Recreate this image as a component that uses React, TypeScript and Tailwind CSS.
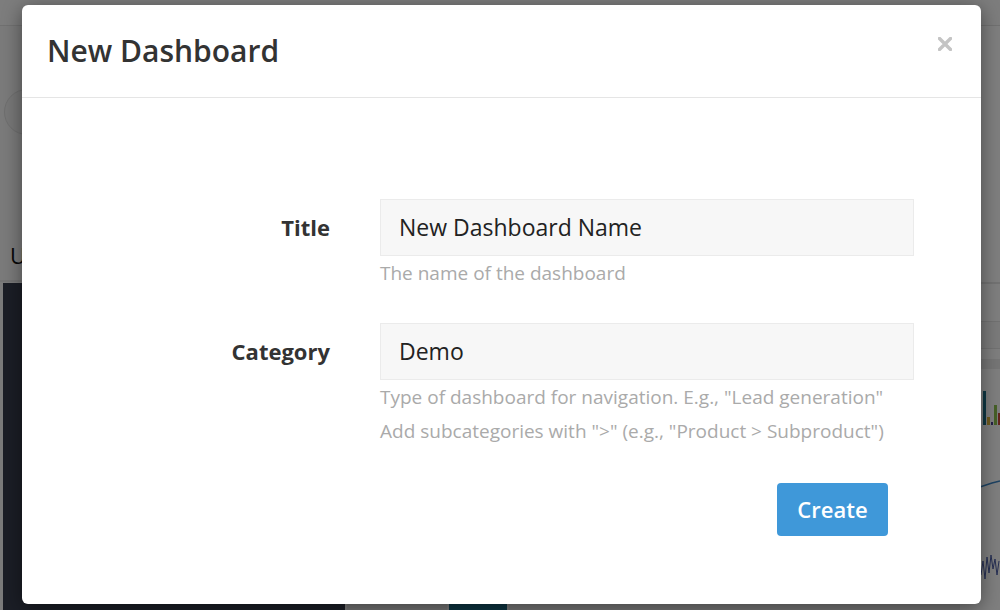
import React from "react";

const font = "font-['Open_Sans','Liberation_Sans',sans-serif]";

function BackgroundPage() {
  return (
    <div className="flex h-full w-full flex-col bg-[#f6f6f6]">
      {/* top nav */}
      <div className="h-[26px] w-full border-b border-[#e2e2e2] bg-[#fafafa]"></div>

      <div className="flex flex-1 justify-between">
        {/* left column */}
        <div className="flex w-[345px] flex-col">
          <div className="ml-[4px] mt-[63px] h-[46px] w-[46px] rounded-full border border-[#dedede] bg-[#f1f1f1]"></div>
          <div className="ml-[10px] mt-[105px] text-[22px] leading-[30px] text-[#111]">Usage</div>
          <div className="mt-[10px] h-[2px] w-full bg-[#e8e8e8]"></div>
          <div className="ml-[3px] mt-[1px] flex-1 bg-[#363c4c]"></div>
        </div>

        {/* middle thumbnails */}
        <div className="flex flex-1 items-end gap-[2px] pl-[2px]">
          <div className="h-[320px] w-[100px] bg-[#e9e9e9]"></div>
          <div className="h-[320px] w-[58px] bg-[#1a6a85]"></div>
          <div className="h-[320px] flex-1 bg-[#ededed]"></div>
        </div>

        {/* right charts */}
        <div className="flex w-[40px] flex-col bg-white">
          <div className="mt-[256px] h-[2px] bg-[#e6e6e6]"></div>
          <div className="mt-[37px] h-[28px] border-y border-[#e4e4e4] bg-[#f7f7f7]"></div>
          <div className="mt-[10px] h-[10px] bg-[#ececec]"></div>
          <div className="mt-[16px] flex h-[40px] items-end gap-[1px] pl-[23px]">
            <div className="h-[34px] w-[4px] bg-[#1d6e86]"></div>
            <div className="h-[8px] w-[3px] bg-[#e1b73a]"></div>
            <div className="h-[3px] w-[3px] bg-[#4a3d8f]"></div>
            <div className="h-[20px] w-[3px] bg-[#8cc34f]"></div>
            <div className="h-[12px] w-[3px] bg-[#c94a3a]"></div>
          </div>
          <svg width="40" height="70">
            <path d="M20 62 L26 60 L32 58 L40 56" stroke="#3d86c6" strokeWidth="1.5" fill="none" />
          </svg>
          <svg width="40" height="100">
            <path
              d="M21 80 L23 66 L25 84 L27 62 L29 78 L31 60 L33 74 L35 64 L37 80 L39 66"
              stroke="#4d5fa8"
              strokeWidth="1"
              fill="none"
            />
          </svg>
        </div>
      </div>
    </div>
  );
}

function CloseIcon() {
  return (
    <svg width="14" height="14" viewBox="0 0 14 14">
      <path d="M1.5 1.5 L12.5 12.5 M12.5 1.5 L1.5 12.5" stroke="#c4c4c4" strokeWidth="3.4" strokeLinecap="square" />
    </svg>
  );
}

export default function App() {
  return (
    <div className={`relative h-[610px] w-[1000px] overflow-hidden ${font}`}>
      <BackgroundPage />

      {/* dim overlay */}
      <div className="absolute inset-0 bg-black/50"></div>

      {/* MODAL */}
      <div className="absolute left-[22px] top-[5px] h-[599px] w-[959px] rounded-[6px] bg-white shadow-[0_4px_20px_rgba(0,0,0,0.45)]">
        {/* header */}
        <div className="flex h-[93px] items-center justify-between border-b border-[#e5e5e5] pl-[25px] pr-[29px]">
          <h2 className="text-[30px] font-semibold leading-[38px] text-[#333]">New Dashboard</h2>
          <button className="mt-[-14px] self-center">
            <CloseIcon />
          </button>
        </div>

        {/* body */}
        <div className="grid grid-cols-[308px_534px] gap-x-[50px] pt-[101px]">
          <label className="flex h-[57px] items-center justify-end text-[22px] font-bold text-[#333]">Title</label>
          <div className="flex flex-col">
            <div className="flex h-[57px] items-center border border-[#ebebeb] bg-[#f7f7f7] pl-[18px] text-[23px] text-[#222]">
              New Dashboard Name
            </div>
            <p className="text-[19px] leading-[34px] text-[#aaaaaa]">The name of the dashboard</p>
          </div>

          <label className="mt-[33px] flex h-[57px] items-center justify-end text-[22px] font-bold text-[#333]">
            Category
          </label>
          <div className="mt-[33px] flex flex-col">
            <div className="flex h-[57px] items-center border border-[#ebebeb] bg-[#f7f7f7] pl-[18px] text-[23px] text-[#222]">
              Demo
            </div>
            <p className="text-[19px] leading-[34px] text-[#aaaaaa]">
              Type of dashboard for navigation. E.g., "Lead generation"
            </p>
            <p className="text-[19px] leading-[34px] text-[#aaaaaa]">
              Add subcategories with "&gt;" (e.g., "Product &gt; Subproduct")
            </p>
          </div>

          <div></div>
          <div className="mt-[35px] flex justify-end pr-[26px]">
            <button className="flex h-[53px] w-[111px] items-center justify-center rounded-[4px] bg-[#3f98d9] text-[22px] font-semibold text-white">
              Create
            </button>
          </div>
        </div>
      </div>
    </div>
  );
}
